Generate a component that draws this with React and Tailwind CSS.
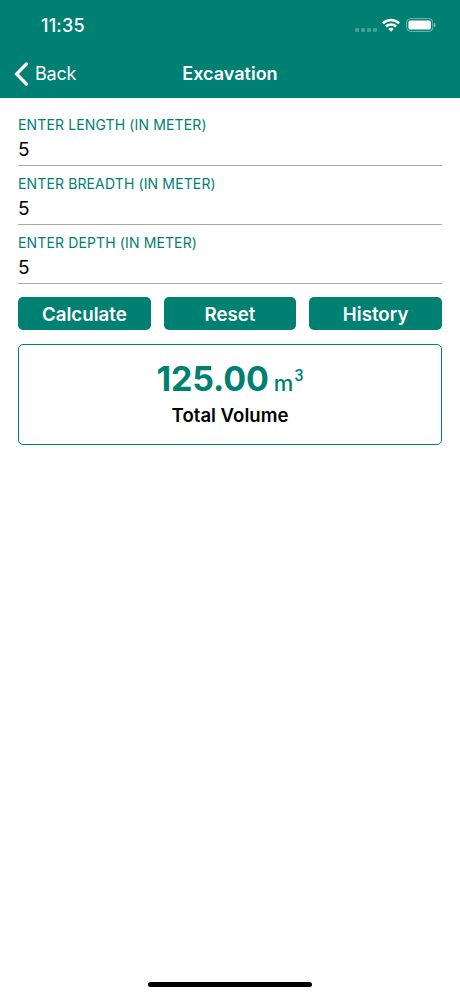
const fields = [
  { label: "ENTER LENGTH (IN METER)", value: "5" },
  { label: "ENTER BREADTH (IN METER)", value: "5" },
  { label: "ENTER DEPTH (IN METER)", value: "5" },
];

function StatusBar() {
  return (
    <div className="flex h-[50px] items-center pl-[41px] pr-[24px] text-white">
      <span className="pt-[2px] text-[18px] font-medium leading-none tracking-[0.2px]">11:35</span>
      <div className="ml-auto flex items-center">
        <div className="flex gap-[2px] pt-[10px]">
          {[0, 1, 2, 3].map((i) => (
            <span key={i} className="size-[4px] rounded-[1px] bg-white/25" />
          ))}
        </div>
        <svg width="18" height="14" viewBox="0 0 18 14" className="ml-[5px]" fill="none" stroke="white" strokeWidth="2.5">
          <path d="M.9 5.3a11.6 11.6 0 0 1 16.2 0" />
          <path d="M3.9 8.5a7.3 7.3 0 0 1 10.2 0" />
          <path d="M9 13.7L6.3 11a3.9 3.9 0 0 1 5.4 0z" fill="white" stroke="none" />
        </svg>
        <svg width="30" height="14" viewBox="0 0 30 14" className="ml-[6px]">
          <rect x=".6" y=".6" width="26.2" height="12.8" rx="4" fill="none" stroke="white" strokeOpacity=".45" />
          <rect x="2.4" y="2.4" width="22.6" height="9.2" rx="2.2" fill="white" />
          <path d="M28 4.8q1.5.7 1.5 2.2t-1.5 2.2z" fill="white" fillOpacity=".5" />
        </svg>
      </div>
    </div>
  );
}

export default function App() {
  return (
    <div className="flex h-[996px] w-[460px] flex-col bg-white font-['Inter',sans-serif]">
      <header className="h-[98px] bg-[#008073]">
        <StatusBar />
        <div className="grid h-[47px] grid-cols-3 items-center text-white">
          <div className="flex items-center pl-[14px]">
            <svg width="15" height="24" viewBox="0 0 15 24" fill="none" stroke="white" strokeWidth="3.3" strokeLinecap="round">
              <path d="M12.4 2L2.6 12l9.8 10" strokeLinejoin="miter" />
            </svg>
            <span className="ml-[6px] text-[18px] tracking-[-0.2px]">Back</span>
          </div>
          <h1 className="text-center text-[18px] font-semibold">Excavation</h1>
        </div>
      </header>
      <main className="flex flex-col px-[18px] pt-[9px]">
        {fields.map((f) => (
          <label key={f.label} className="flex h-[59px] flex-col border-b border-[#a8a8a8] pt-[9px]">
            <span className="text-[14px] leading-[18px] tracking-[0.13px] text-[#008073]">{f.label}</span>
            <span className="text-[19px] leading-[32px] text-black">{f.value}</span>
          </label>
        ))}
        <div className="mt-[13px] grid grid-cols-3 gap-[13px]">
          {["Calculate", "Reset", "History"].map((b) => (
            <button key={b} className="h-[33px] rounded-[5px] bg-[#008073] pt-[3px] text-[18.7px] font-semibold leading-none text-white">{b}</button>
          ))}
        </div>
        <section className="mt-[14px] flex h-[101px] flex-col items-center rounded-[5px] border border-[#008073] pt-[14px]">
          <div className="flex h-[40px] items-baseline text-[#008073]">
            <span className="text-[34px] font-bold leading-[40px] tracking-[-0.15px]">125.00</span>
            <span className="ml-[5px] text-[22px] font-medium leading-[40px]">m</span>
            <span className="relative -top-[10px] ml-px font-['Roboto',sans-serif] text-[16px] font-medium leading-none">3</span>
          </div>
          <div className="text-[18.6px] font-semibold leading-[32px] text-black">Total Volume</div>
        </section>
      </main>
      <div className="mx-auto mb-[9px] mt-auto h-[5px] w-[164px] rounded-full bg-black" />
    </div>
  );
}
